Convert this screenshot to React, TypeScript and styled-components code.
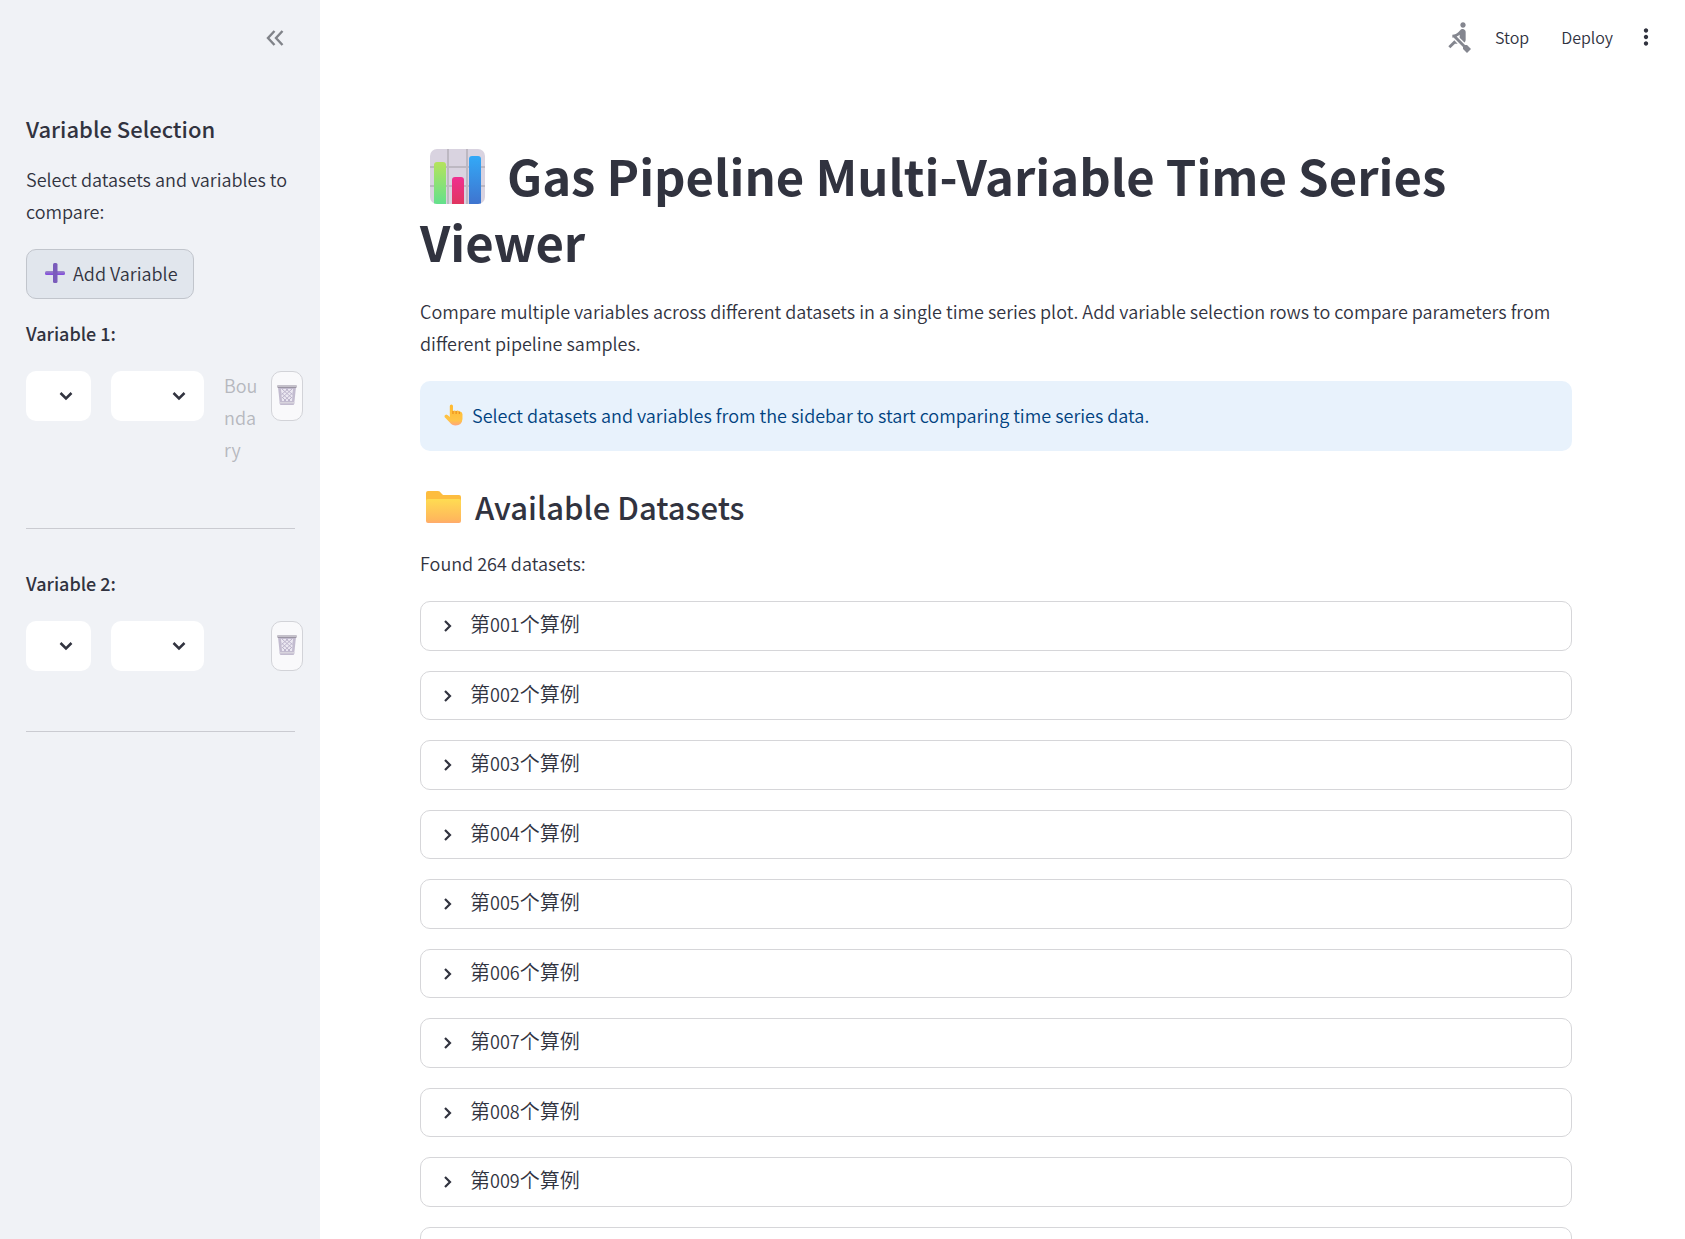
import React from "react";
import styled, { createGlobalStyle } from "styled-components";
import { MdRowing, MdMoreVert } from "react-icons/md";

const ink = "#31333f";

const GlobalStyle = createGlobalStyle`
  *, *::before, *::after { box-sizing: border-box; }
  body {
    margin: 0;
    background: #ffffff;
    color: ${ink};
    font-family: "Noto Sans CJK SC", "Noto Sans", sans-serif;
    font-size: 18px;
    font-weight: 350;
    line-height: 32px;
    overflow: hidden;
  }
  button, select { font: inherit; color: inherit; }
`;

const Shell = styled.div`
  display: grid;
  grid-template-columns: 320px minmax(0, 1fr);
  height: 100vh;
  overflow: hidden;
`;

const Sidebar = styled.aside`
  background: #f0f2f6;
  padding: 20px 25px 0 26px;
`;

const SidebarTop = styled.div`
  display: flex;
  justify-content: flex-end;
  margin-bottom: 54px;
  padding-right: 2px;
`;

const IconButton = styled.button`
  display: flex;
  align-items: center;
  justify-content: center;
  width: 36px;
  height: 36px;
  padding: 0;
  border: 0;
  border-radius: 10px;
  background: transparent;
`;

const SidebarTitle = styled.h2`
  margin: 0 0 17px;
  font-size: 22px;
  line-height: 36px;
  font-weight: 500;
`;

const Text = styled.p`
  margin: 0 0 22px;
`;

const AddButton = styled.button`
  display: flex;
  align-items: center;
  gap: 8px;
  height: 50px;
  padding: 0 15px 2px 18px;
  border: 1px solid #c1c5cc;
  border-radius: 10px;
  background: #e1e6ed;
`;

const VariableLabel = styled.p`
  margin: 18px 0 22px;
  font-weight: 500;
`;

const VariableRow = styled.div<{ $tall?: boolean }>`
  display: grid;
  grid-template-columns: minmax(0, 65fr) minmax(0, 93fr) minmax(0, 27fr) minmax(0, 24fr);
  gap: 20px;
  min-height: ${(p) => (p.$tall ? "97px" : "50px")};
`;

const SelectBox = styled.div`
  position: relative;
  min-width: 0;
  height: 50px;
`;

const Select = styled.select`
  appearance: none;
  width: 100%;
  height: 50px;
  border: 0;
  border-radius: 10px;
  background: #ffffff;
`;

const SelectArrow = styled.svg`
  position: absolute;
  right: 18px;
  top: 19px;
  pointer-events: none;
`;

const Status = styled.div`
  width: 36px;
  height: 94px;
  margin-top: -2px;
  color: #b6b8be;
  overflow-wrap: anywhere;
`;

const DeleteButton = styled.button`
  display: flex;
  align-items: center;
  justify-content: center;
  width: 32px;
  height: 50px;
  padding: 0 0 2px;
  border: 1px solid #d2d3d8;
  border-radius: 10px;
  background: #f9f9fb;
`;

const Rule = styled.hr`
  height: 1px;
  margin: 60px 0 38px;
  border: 0;
  background: #cacbd1;
`;

const Main = styled.main`
  min-width: 0;
`;

const Toolbar = styled.header`
  display: flex;
  align-items: center;
  justify-content: flex-end;
  height: 74px;
  padding-right: 22px;
`;

const ToolButton = styled.button`
  height: 36px;
  padding: 0 16px;
  border: 0;
  background: transparent;
  font-size: 16px;
  line-height: 28px;
`;

const MenuButton = styled(IconButton)`
  width: 34px;
`;

const Running = styled.span`
  display: flex;
  margin-right: 4px;
  color: #84868f;
`;

const Content = styled.div`
  padding: 68px 113px 0 100px;
`;

const Title = styled.h1`
  margin: 0 0 21px;
  font-size: 49px;
  line-height: 66px;
  font-weight: 700;
`;

const TitleIcon = styled.svg`
  vertical-align: -8px;
  margin: 0 22px 0 10px;
`;

const Notice = styled.div`
  display: flex;
  align-items: center;
  gap: 9px;
  height: 70px;
  padding: 0 24px 2px;
  border-radius: 10px;
  background: #e8f2fc;
  color: #004280;
`;

const SectionTitle = styled.h2`
  display: flex;
  align-items: center;
  gap: 14px;
  margin: 35px 0 19px;
  padding-left: 6px;
  font-size: 31px;
  line-height: 42px;
  font-weight: 500;
`;

const DatasetList = styled.div`
  display: flex;
  flex-direction: column;
  gap: 20px;
`;

const Dataset = styled.details`
  flex: none;
  height: 50px;
  border: 1px solid #d6d6d9;
  border-radius: 10px;
  &:nth-child(even) { height: 49px; }
  &[open] { height: auto; }
`;

const DatasetSummary = styled.summary`
  display: flex;
  align-items: center;
  gap: 14px;
  height: 47px;
  padding: 0 19px;
  list-style: none;
  cursor: pointer;
`;

const DatasetName = styled.span`
  padding-bottom: 4px;
  font-size: 20px;
  line-height: 30px;
`;

const Digits = styled.span`
  font-size: 18px;
`;

function ChevronDown() {
  return (
    <SelectArrow width="14" height="12" viewBox="0 0 14 12" fill="none" stroke={ink} strokeWidth="2.5">
      <path d="M1.5 3L7 8.5L12.5 3" />
    </SelectArrow>
  );
}

function TrashIcon() {
  return (
    <svg width="20" height="20" viewBox="0 0 20 20" aria-hidden="true">
      <path d="M1 2H19L17.2 19Q17 20 16 20H4Q3 20 2.8 19Z" fill="#c2bbcf" />
      <path d="M4 4H16L15 16H5Z" fill="#ebe8f1" />
      <path d="M5 4L15 13M9 4L15.5 9.500M4.500 8L13 16M5 12L9 16M15 4L5 13M11 4L4.500 9.500M15.500 8L7 16M15 12L11 16" stroke="#bcb4cc" strokeWidth="1" />
      <rect x="0" y="0" width="20" height="3" rx="1" fill="#c4c0ca" />
      <rect x="1" y="2" width="18" height="1" fill="#9a94a3" />
      <rect x="2.500" y="17" width="15" height="1.500" fill="#d8d4de" />
    </svg>
  );
}

function ChartIcon() {
  return (
    <TitleIcon width="55" height="55" viewBox="0 0 55 55" aria-hidden="true">
      <defs>
        <linearGradient id="green" x2="0" y2="1"><stop stopColor="#b5e35c" /><stop offset="1" stopColor="#63e08c" /></linearGradient>
        <linearGradient id="pink" x2="0" y2="1"><stop stopColor="#ef2f90" /><stop offset="1" stopColor="#e0355f" /></linearGradient>
        <linearGradient id="blue" x2="0" y2="1"><stop stopColor="#33a9f7" /><stop offset="1" stopColor="#3f74cf" /></linearGradient>
        <clipPath id="tile"><rect width="55" height="55" rx="7" /></clipPath>
      </defs>
      <g clipPath="url(#tile)">
        <rect width="55" height="55" fill="#d9d3e0" />
        <path d="M18 0V55M37 0V55M0 18H55M0 37H55" stroke="#bdb8c2" strokeWidth="2" />
        <path d="M4 55V16Q4 13 7 13H13Q16 13 16 16V55Z" fill="url(#green)" />
        <path d="M22 55V31Q22 28 25 28H31Q34 28 34 31V55Z" fill="url(#pink)" />
        <path d="M39 55V10Q39 7 42 7H48Q51 7 51 10V55Z" fill="url(#blue)" />
      </g>
    </TitleIcon>
  );
}

function FolderIcon() {
  return (
    <svg width="35" height="32" viewBox="0 0 35 32" aria-hidden="true">
      <defs>
        <linearGradient id="folder" x2="0" y2="1"><stop stopColor="#ffdc52" /><stop offset=".85" stopColor="#ffb85c" /><stop offset="1" stopColor="#ffaa6e" /></linearGradient>
      </defs>
      <path d="M0 2Q0 0 2 0H12Q14 0 15 2L17 4H33Q35 4 35 6V12H0Z" fill="#fdbd3f" />
      <path d="M0 10Q0 8 2 8H33Q35 8 35 10V30Q35 32 33 32H2Q0 32 0 30Z" fill="url(#folder)" />
    </svg>
  );
}

function PointerIcon() {
  return (
    <svg width="19" height="22" viewBox="0 0 18 22" preserveAspectRatio="none" aria-hidden="true">
      <defs>
        <linearGradient id="hand" x2="0" y2="1"><stop stopColor="#ffb92e" /><stop offset=".75" stopColor="#ffc447" /><stop offset="1" stopColor="#ffa57c" /></linearGradient>
      </defs>
      <path d="M5.500 13V2Q5.500 .5 7 .5T8.500 2V7Q9.500 6 11.500 7Q13 6 14.500 7.500Q17 7 17.500 10V15Q17 21.500 11 21.500Q7.500 21.500 5.500 18.500L.5 13Q0 11 2 10.500Q3.500 10.500 5.500 13Z" fill="url(#hand)" />
      <path d="M8.500 7V10M11.500 7V10M14.500 7.500V10" stroke="#e8891c" strokeWidth="1" />
    </svg>
  );
}

function PlusIcon() {
  return (
    <svg width="20" height="20" viewBox="0 0 20 20" aria-hidden="true">
      <defs>
        <linearGradient id="plus" x2="0" y2="1"><stop stopColor="#9a8cc4" /><stop offset="1" stopColor="#8044e0" /></linearGradient>
      </defs>
      <rect y="8" width="20" height="4" rx="1.500" fill="url(#plus)" />
      <rect x="8" width="4.500" height="20" rx="1.500" fill="#7a5cbb" />
    </svg>
  );
}

function Variable({ index, status }: { index: number; status?: string }) {
  return (
    <section>
      <VariableLabel>Variable {index}:</VariableLabel>
      <VariableRow $tall={Boolean(status)}>
        <SelectBox>
          <Select aria-label={`Dataset ${index}`} />
          <ChevronDown />
        </SelectBox>
        <SelectBox>
          <Select aria-label={`Parameter ${index}`} />
          <ChevronDown />
        </SelectBox>
        {status ? <Status>{status}</Status> : <span />}
        <DeleteButton aria-label={`Remove variable ${index}`}><TrashIcon /></DeleteButton>
      </VariableRow>
      <Rule />
    </section>
  );
}

const datasets = ["001", "002", "003", "004", "005", "006", "007", "008", "009", "010"];

export default function App() {
  return (
    <>
      <GlobalStyle />
      <Shell>
        <Sidebar>
          <SidebarTop>
            <IconButton aria-label="Collapse sidebar">
              <svg width="18" height="16" viewBox="0 0 18 16" fill="none" stroke="#808389" strokeWidth="2.4">
                <path d="M8.500 1L2 8L8.500 15M16.500 1L10 8L16.500 15" />
              </svg>
            </IconButton>
          </SidebarTop>
          <SidebarTitle>Variable Selection</SidebarTitle>
          <Text>Select datasets and variables to compare:</Text>
          <AddButton><PlusIcon />Add Variable</AddButton>
          <Variable index={1} status="Boundary" />
          <Variable index={2} />
        </Sidebar>
        <Main>
          <Toolbar>
            <Running><MdRowing size={32} /></Running>
            <ToolButton>Stop</ToolButton>
            <ToolButton>Deploy</ToolButton>
            <MenuButton aria-label="Menu"><MdMoreVert size={26} /></MenuButton>
          </Toolbar>
          <Content>
            <Title><ChartIcon />Gas Pipeline Multi-Variable Time Series Viewer</Title>
            <Text>
              Compare multiple variables across different datasets in a single time series plot. Add
              variable selection rows to compare parameters from different pipeline samples.
            </Text>
            <Notice>
              <PointerIcon />
              Select datasets and variables from the sidebar to start comparing time series data.
            </Notice>
            <SectionTitle><FolderIcon />Available Datasets</SectionTitle>
            <Text>Found 264 datasets:</Text>
            <DatasetList>
              {datasets.map((id) => (
                <Dataset key={id}>
                  <DatasetSummary>
                    <svg width="16" height="16" viewBox="0 0 16 16" fill="none" stroke={ink} strokeWidth="2.2">
                      <path d="M5 3L10 8L5 13" />
                    </svg>
                    <DatasetName>第<Digits>{id}</Digits>个算例</DatasetName>
                  </DatasetSummary>
                </Dataset>
              ))}
            </DatasetList>
          </Content>
        </Main>
      </Shell>
    </>
  );
}
